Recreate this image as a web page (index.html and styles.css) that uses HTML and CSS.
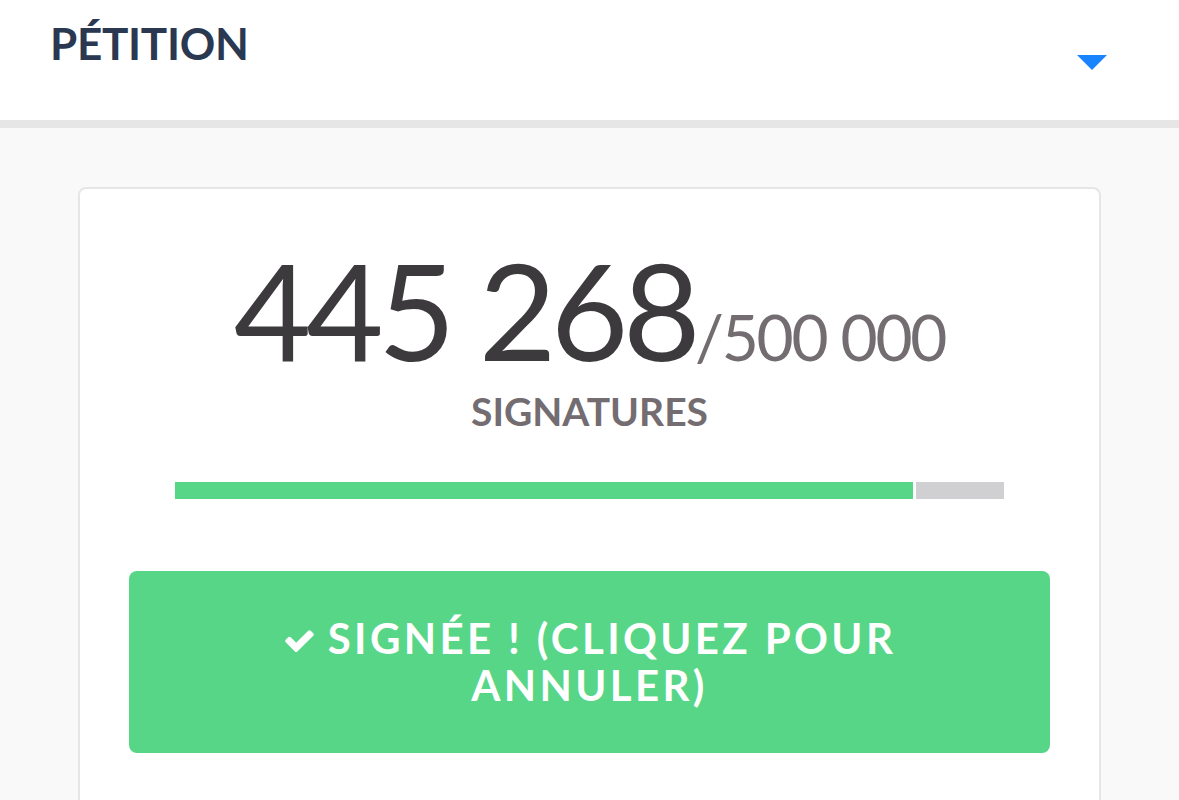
FILE: index.html
```html
<!DOCTYPE html>
<html lang="fr">
<head>
<meta charset="utf-8">
<title>Pétition</title>
<link rel="stylesheet" href="styles.css">
</head>
<body>
<header class="topbar">
  <h1 class="topbar-title">PÉTITION</h1>
  <span class="topbar-caret" aria-hidden="true"></span>
</header>
<main class="page">
  <section class="card">
    <div class="count">
      <span class="count-current">445 268</span><span class="count-goal">/500 000</span>
    </div>
    <div class="count-label">SIGNATURES</div>
    <div class="progress">
      <div class="progress-fill" style="width: 89.05%"></div>
      <div class="progress-rest"></div>
    </div>
    <button class="sign-btn" type="button">
      <svg class="sign-check" viewBox="0 0 1792 1792" aria-hidden="true"><path d="M1671 566q0 40-28 68l-724 724-136 136q-28 28-68 28t-68-28l-136-136-362-362q-28-28-28-68t28-68l136-136q28-28 68-28t68 28l294 295 656-657q28-28 68-28t68 28l136 136q28 28 28 68z"/></svg>SIGNÉE ! (CLIQUEZ POUR ANNULER)
    </button>
  </section>
</main>
</body>
</html>
```

FILE: styles.css
```css
* { box-sizing: border-box; }

html, body {
  margin: 0;
  padding: 0;
  background: #f9f9f9;
  font-family: "Lato", "Open Sans", sans-serif;
}

.topbar {
  height: 128px;
  background: #ffffff;
  border-bottom: 8px solid #e6e6e6;
  display: flex;
  justify-content: space-between;
  align-items: flex-start;
  padding: 0 72px 0 50px;
}

.topbar-title {
  margin: 21px 0 0;
  font-size: 44px;
  line-height: 1;
  font-weight: 700;
  letter-spacing: -0.3px;
  color: #2a3852;
}

.topbar-caret {
  margin-top: 55px;
  width: 0;
  height: 0;
  border-left: 15px solid transparent;
  border-right: 15px solid transparent;
  border-top: 15px solid #1a84ff;
}

.page {
  padding: 59px 78px 0;
}

.card {
  background: #ffffff;
  border: 2px solid #e6e6e6;
  border-radius: 8px;
  padding: 54px 49px 60px;
  min-height: 700px;
  display: flex;
  flex-direction: column;
  align-items: center;
}

.count {
  line-height: 1;
  white-space: nowrap;
}

.count-current {
  font-size: 134px;
  font-weight: 400;
  letter-spacing: -0.042em;
  color: #3d3a3d;
}

.count-goal {
  font-size: 64px;
  font-weight: 400;
  letter-spacing: -0.035em;
  color: #736c70;
}

.count-label {
  margin-top: 15px;
  font-size: 39px;
  line-height: 1;
  font-weight: 700;
  color: #736c71;
}

.progress {
  margin-top: 51px;
  width: 829px;
  height: 17px;
  display: flex;
}

.progress-fill {
  background: #57d687;
  height: 100%;
}

.progress-rest {
  flex: 1;
  margin-left: 3px;
  background: #d0cfd1;
  height: 100%;
}

.sign-btn {
  margin-top: 72px;
  width: 100%;
  height: 182px;
  border: none;
  border-radius: 8px;
  background: #57d687;
  color: #ffffff;
  font-family: inherit;
  font-size: 42px;
  line-height: 47px;
  font-weight: 700;
  letter-spacing: 0.08em;
  padding: 0 110px;
  text-align: center;
}

.sign-check {
  width: 33px;
  height: 33px;
  fill: #ffffff;
  margin-right: 12px;
  vertical-align: -3px;
}
```
